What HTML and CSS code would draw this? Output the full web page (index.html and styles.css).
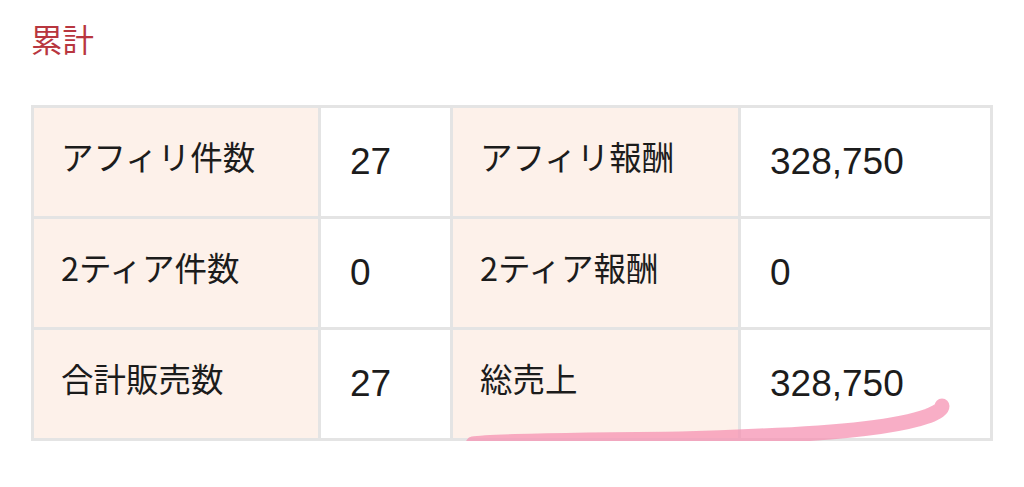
FILE: index.html
```html
<!DOCTYPE html>
<html lang="ja">
<head>
<meta charset="utf-8">
<link rel="stylesheet" href="styles.css">
</head>
<body>
<div class="page">
  <h2 class="title">累計</h2>
  <div class="table-wrap">
    <div class="grid">
      <div class="cell label">アフィリ件数</div>
      <div class="cell value">27</div>
      <div class="cell label">アフィリ報酬</div>
      <div class="cell value">328,750</div>
      <div class="cell label">2ティア件数</div>
      <div class="cell value">0</div>
      <div class="cell label">2ティア報酬</div>
      <div class="cell value">0</div>
      <div class="cell label">合計販売数</div>
      <div class="cell value">27</div>
      <div class="cell label">総売上</div>
      <div class="cell value">328,750</div>
    </div>
    <svg class="marker" width="1024" height="487" viewBox="0 0 1024 487">
      <path d="M473 444 C 490 441, 560 440, 680 439 C 720 438, 740 437, 760 436 C 840 433, 900 426, 928 416 C 938 412, 942 409, 942 406" fill="none" stroke="#f58fb0" stroke-opacity="0.72" stroke-width="15" stroke-linecap="round" stroke-linejoin="round"/>
    </svg>
  </div>
</div>
</body>
</html>
```
FILE: styles.css
```css
html, body {
  margin: 0;
  padding: 0;
  background: #ffffff;
}
.page {
  padding: 20px 0 0 31px;
  font-family: "Noto Sans CJK JP", "Liberation Sans", sans-serif;
}
.title {
  margin: 0 0 49px 0;
  font-size: 31.5px;
  line-height: 36px;
  font-weight: normal;
  color: #b8363f;
}
.table-wrap {
  position: relative;
  width: 962px;
}
.grid {
  display: grid;
  grid-template-columns: 284px 129px 285px 249px;
  grid-template-rows: 108px 108px 108px;
  gap: 3px;
  padding: 3px;
  background: #e4e4e4;
}
.cell {
  display: flex;
  align-items: center;
  padding-left: 27px;
  color: #1c1c1c;
}
.label {
  background: #fdf1ea;
  font-family: "Noto Sans CJK JP", sans-serif;
  font-size: 32.5px;
  padding-bottom: 14px;
}
.value {
  background: #ffffff;
  font-family: "Liberation Sans", Arial, sans-serif;
  font-size: 37px;
  padding-left: 29px;
}
.marker {
  position: absolute;
  left: -31px;
  top: -105px;
  pointer-events: none;
}
```
